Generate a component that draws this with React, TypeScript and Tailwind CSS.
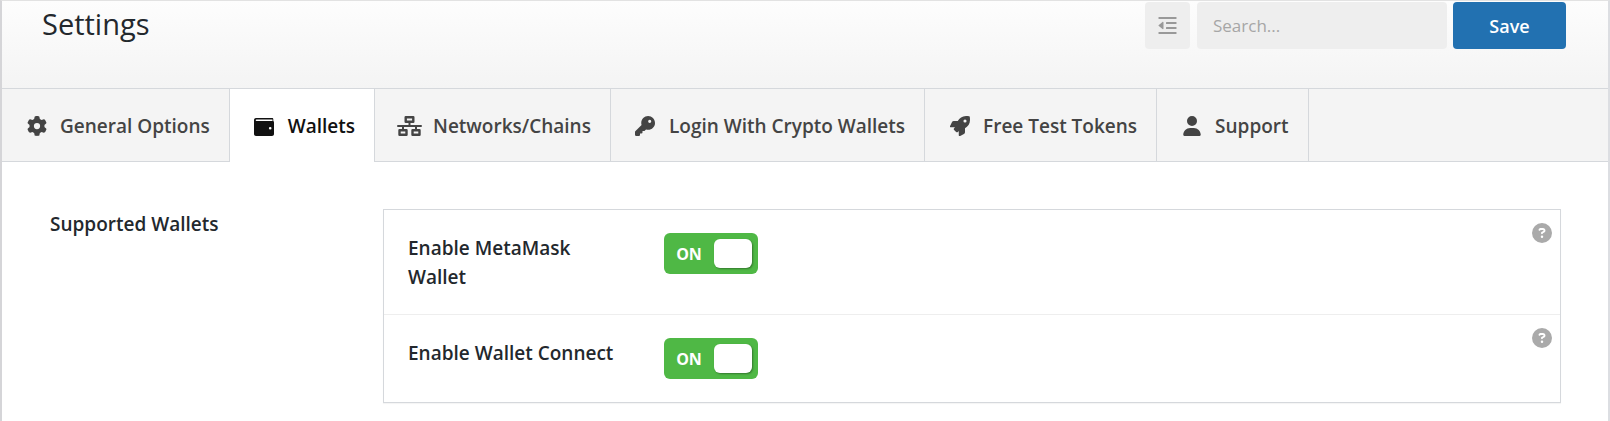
import clsx from "clsx";
import React, { useState } from "react";
import { FaCircleQuestion, FaGear, FaKey, FaUser } from "react-icons/fa6";

const WalletIcon = ({ className }) => (
  <svg viewBox="0 0 20 20" className={className} fill="currentColor">
    <path
      fillRule="evenodd"
      d="M2 1h16c.8 0 1.300.5 1.300 1.200V4c.4.3.7.8.7 1.400V17c0 1.100-.9 2-2 2H2c-1.100 0-2-.9-2-2V3c0-1.100.9-2 2-2zM2.500 2.500c-.5 0-.8.300-.8.8s.3.8.8.8h16V2.500zM16.200 10a1.300 1.300 0 1 0 0 2.600 1.300 1.300 0 1 0 0-2.600z"
    />
  </svg>
);

const NetworkIcon = ({ className }) => (
  <svg
    viewBox="0 0 25 20"
    className={className}
    fill="none"
    stroke="currentColor"
    strokeWidth="2.4"
    strokeLinejoin="round"
    strokeLinecap="round"
  >
    <rect x="8.700" y="1.200" width="7.600" height="4.600" />
    <rect x="2.500" y="14.200" width="7" height="4.600" />
    <rect x="15.500" y="14.200" width="7" height="4.600" />
    <path strokeWidth="2" d="M1 10h23M12.500 6v4M6 10v4M19 10v4" />
  </svg>
);

const RocketIcon = ({ className }) => (
  <svg viewBox="0 0 512 512" className={className} fill="currentColor">
    <path d="M505.05 19.1a15.89 15.89 0 0 0-12.2-12.2C460.65 0 435.46 0 410.36 0c-103.2 0-165.1 55.2-211.29 128H94.87A48 48 0 0 0 52 154.49l-49.42 98.8A24 24 0 0 0 24.07 288h103.77l-22.47 22.47a32 32 0 0 0 0 45.25l50.9 50.91a32 32 0 0 0 45.26 0L224 384.16V488a24 24 0 0 0 34.7 21.49l98.7-49.39a47.91 47.91 0 0 0 26.5-42.9V312.79c72.59-46.3 128-108.4 128-211.09.1-25.2.1-50.4-6.85-82.6zM384 168a40 40 0 1 1 40-40 40 40 0 0 1-40 40z" />
  </svg>
);

const OutdentIcon = () => (
  <svg
    viewBox="0 0 19 17"
    className="w-[19px] h-[17px]"
    fill="currentColor"
  >
    <rect x="0.500" y="0" width="18" height="2" rx="0.5" />
    <rect x="8" y="5" width="10.500" height="2" rx="0.5" />
    <rect x="8" y="10" width="10.500" height="2" rx="0.5" />
    <rect x="0.500" y="15" width="18" height="2" rx="0.5" />
    <path d="M5.500 5.400v6.200c0 .6-.6.8-1 .5L.8 9a.6.6 0 0 1 0-1l3.700-3.100c.4-.3 1-.1 1 .5z" />
  </svg>
);

const tabs = [
  { id: "general", label: "General Options", icon: FaGear },
  { id: "wallets", label: "Wallets", icon: WalletIcon },
  { id: "networks", label: "Networks/Chains", icon: NetworkIcon },
  { id: "login", label: "Login With Crypto Wallets", icon: FaKey },
  { id: "tokens", label: "Free Test Tokens", icon: RocketIcon },
  { id: "support", label: "Support", icon: FaUser },
];

const Header = () => (
  <header className="flex items-start justify-between h-22 pl-10 pr-[42px] pt-px bg-linear-to-b from-[#fdfdfd] to-[#f4f4f4] border-b border-[#d5d8dc]">
    <h1 className="text-[29px] leading-11 text-[#23282d]">Settings</h1>
    <div className="flex">
      <button
        type="button"
        aria-label="Show all options"
        className="flex items-center justify-center w-[45px] h-[47px] rounded bg-[#eee] text-[#999]"
      >
        <OutdentIcon />
      </button>
      <input
        type="text"
        aria-label="Search"
        placeholder="Search..."
        className="w-[250px] h-[47px] ml-[7px] px-4 rounded bg-[#eee] text-[17px] text-[#555] placeholder:text-[#a6a6a6] outline-none"
      />
      <button
        type="button"
        className="w-[113px] h-[47px] ml-1.5 rounded bg-[#2271b1] text-lg font-semibold text-white"
      >
        Save
      </button>
    </div>
  </header>
);

const Toggle = ({ id, checked, onChange }) => (
  <label
    className={clsx(
      "relative flex items-center w-[94px] h-[41px] rounded-md cursor-pointer",
      checked ? "bg-[#4fb845]" : "bg-[#999]",
    )}
  >
    <input
      id={id}
      type="checkbox"
      checked={checked}
      onChange={onChange}
      className="sr-only"
    />
    <span
      className={clsx(
        "w-[50px] text-center text-base font-bold text-white",
        !checked && "ml-auto",
      )}
    >
      {checked ? "ON" : "OFF"}
    </span>
    <span
      className={clsx(
        "absolute top-1.5 w-[38px] h-[29px] rounded-md bg-white shadow-[1px_1px_2px_rgba(0,0,0,0.35)]",
        checked ? "right-1.5" : "left-1.5",
      )}
    />
  </label>
);

const Field = ({ id, label }) => {
  const [checked, setChecked] = useState(true);

  return (
    <div className="flex items-start pl-6 pr-2 pt-[23px] pb-[22px] border-b border-[#eee] last:border-b-0 last:pb-[23px]">
      <label
        htmlFor={id}
        className="w-[216px] mr-10 pt-px text-[19px] leading-[29px] font-semibold text-[#23282d]"
      >
        {label}
      </label>
      <Toggle
        id={id}
        checked={checked}
        onChange={() => setChecked(!checked)}
      />
      <button
        type="button"
        aria-label={`Help: ${label}`}
        className="ml-auto -mt-2.5 text-[#aaa]"
      >
        <FaCircleQuestion className="size-5" />
      </button>
    </div>
  );
};

const App = () => {
  const [active, setActive] = useState("wallets");

  return (
    <div className="min-h-screen border-l-2 border-l-[#d5d5d8] border-r-2 border-r-[#dcdee2] border-t border-t-[#e2e2e2] bg-white font-['Open_Sans','Segoe_UI',sans-serif]">
      <Header />
      <nav className="flex h-[73px] bg-[#f4f4f4] border-b border-[#d5d8dc]">
        {tabs.map(({ id, label, icon: Icon }) => (
          <a
            key={id}
            href={`#${id}`}
            onClick={() => setActive(id)}
            className={clsx(
              "flex items-center pl-[22px] pr-[19px] pt-0.5 border-r border-[#d5d8dc] text-[19px] font-semibold whitespace-nowrap",
              active === id ? "-mb-px bg-white text-[#111]" : "text-[#444]",
            )}
          >
            <span className="flex justify-center w-[25px] mr-[11px]">
              <Icon className="h-5 w-auto shrink-0" />
            </span>
            {label}
          </a>
        ))}
      </nav>
      <section className="flex items-start pl-12 pr-[47px] pt-[47px] pb-[18px]">
        <h2 className="w-[333px] pt-px text-[19px] leading-[29px] font-semibold text-[#23282d]">
          Supported Wallets
        </h2>
        <div className="flex-1 border border-[#d5d8dc] shadow-[0_1px_1px_rgba(0,0,0,0.04)]">
          <Field id="metamask" label="Enable MetaMask Wallet" />
          <Field id="wallet-connect" label="Enable Wallet Connect" />
        </div>
      </section>
    </div>
  );
};

export default App;
